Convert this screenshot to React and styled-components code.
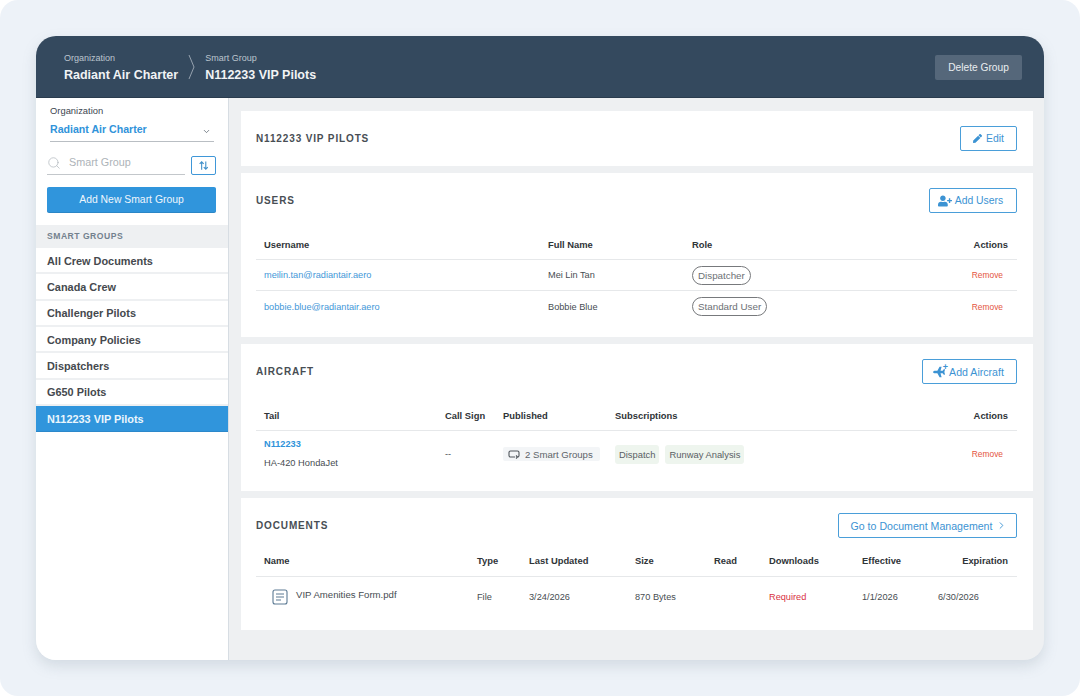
import styled, { createGlobalStyle } from "styled-components"
import { FaPen, FaUserPlus, FaPlane } from "react-icons/fa"
import { Search, ChevronDown, ChevronRight } from "lucide-react"

const GlobalStyle = createGlobalStyle`
    html, body {
        margin: 0;
        padding: 0;
        background: #ffffff;
        font-family: "Liberation Sans", Arial, sans-serif;
    }
    * { box-sizing: border-box; }
`
const Frame = styled.div`
    width: 1080px;
    height: 696px;
    padding: 36px;
    background: #edf2f8;
    border-radius: 18px;
    overflow: hidden;
`
const Card = styled.div`
    width: 1008px;
    height: 624px;
    border-radius: 20px;
    overflow: hidden;
    display: flex;
    flex-direction: column;
    background: #eef0f2;
    box-shadow: 0 6px 14px rgba(120, 135, 150, 0.22);
`
const Header = styled.header`
    height: 62px;
    flex: none;
    background: #34495e;
    border-bottom: 1px solid #2a3c4e;
    display: flex;
    align-items: center;
    padding: 2px 22px 0 28px;
    color: #fff;
`
const Crumb = styled.div`
    display: flex;
    flex-direction: column;
    gap: 4px;
`
const CrumbLabel = styled.span`
    font-size: 9px;
    line-height: 11px;
    color: #bcc5ce;
`
const CrumbValue = styled.span`
    font-size: 12.5px;
    line-height: 15px;
    font-weight: 700;
    color: #f1f3f5;
`
const CrumbArrow = styled.svg`
    width: 7px;
    height: 26px;
    margin: -2px 10px 0 10px;
    fill: none;
    stroke: #aeb9c4;
    stroke-width: 0.8;
`
const DeleteButton = styled.button`
    margin-left: auto;
    width: 87px;
    height: 25px;
    border: none;
    border-radius: 2px;
    background: #55677a;
    color: #e9edf0;
    font: 10.2px "Liberation Sans", Arial, sans-serif;
    padding: 0;
`
const Body = styled.div`
    flex: 1;
    min-height: 0;
    display: flex;
`
const Sidebar = styled.aside`
    width: 193px;
    flex: none;
    background: #fff;
    border-right: 1px solid #d7dde3;
    padding-top: 7px;
`
const Filters = styled.div`
    padding: 0 12px 0 11px;
`
const OrgLabel = styled.div`
    font-size: 9.4px;
    line-height: 11px;
    color: #3c4650;
    margin-left: 3px;
`
const OrgSelect = styled.div`
    margin: 7px 2px 0 3px;
    height: 19px;
    display: flex;
    justify-content: space-between;
    align-items: flex-start;
    border-bottom: 1.5px solid #b9bec3;
    color: #3093da;
    font-size: 10.6px;
    line-height: 13px;
    font-weight: 700;
    svg { margin: 4px 3px 0 0; color: #56616b; }
`
const SearchRow = styled.div`
    margin-top: 14px;
    display: flex;
    align-items: flex-end;
    gap: 6px;
`
const SearchField = styled.div`
    flex: 1;
    height: 19px;
    border-bottom: 1.5px solid #c3c7cb;
    display: flex;
    align-items: flex-start;
    gap: 8px;
    padding-left: 0;
    color: #adb3b8;
    font-size: 10.8px;
    line-height: 13px;
    svg { color: #b4bac0; margin-top: 0; }
`
const SortButton = styled.div`
    width: 25px;
    height: 19px;
    border: 1px solid #3f97d8;
    border-radius: 2px;
    display: flex;
    align-items: center;
    justify-content: center;
    svg { width: 11px; height: 11px; fill: none; stroke: #3f8fc9; stroke-width: 1.2; }
`
const AddGroupButton = styled.button`
    margin-top: 12px;
    width: 100%;
    height: 25px;
    border: none;
    border-radius: 2px;
    background: #3095dc;
    box-shadow: 0 1px 0 #2a86c6;
    color: #eef6fc;
    font: 10.4px "Liberation Sans", Arial, sans-serif;
    padding: 0;
`
const GroupsHeading = styled.div`
    margin-top: 13px;
    height: 23px;
    background: #eef0f2;
    padding-left: 11px;
    font-size: 8.6px;
    line-height: 23px;
    font-weight: 700;
    letter-spacing: 0.5px;
    color: #73818e;
`
const GroupItem = styled.div`
    height: 26.33px;
    padding: 1px 0 0 11px;
    display: flex;
    align-items: center;
    font-size: 10.9px;
    font-weight: 700;
    color: ${props => props.$active ? "#eaf5fc" : "#45494e"};
    background: ${props => props.$active ? "#3095dc" : "#fff"};
    border-bottom: ${props => props.$active ? "1px solid #2c88ca" : "2px solid #eef0f2"};
`
const Main = styled.main`
    flex: 1;
    min-width: 0;
    padding: 13px 11px 0 12px;
    display: flex;
    flex-direction: column;
    gap: 7px;
`
const Panel = styled.section`
    height: ${props => props.$h}px;
    flex: none;
    background: #fff;
    padding: 15px 16px 0 15px;
`
const PanelTop = styled.div`
    display: flex;
    justify-content: space-between;
    align-items: center;
`
const PanelTitle = styled.h2`
    margin: 0;
    font-size: 10px;
    line-height: 25px;
    font-weight: 700;
    letter-spacing: 0.86px;
    color: #484e54;
`
const OutlineButton = styled.button`
    height: 25px;
    width: ${props => props.$w}px;
    border: 1px solid #4a9ed9;
    border-radius: 2px;
    background: #fff;
    color: #3c93d3;
    font: ${props => props.$fs || 10.4}px "Liberation Sans", Arial, sans-serif;
    display: flex;
    align-items: center;
    justify-content: center;
    gap: ${props => props.$gap || 4}px;
    padding: 0 ${props => props.$pr || 0}px 0 ${props => props.$pl || 0}px;
`
const Row = styled.div`
    display: grid;
    grid-template-columns: ${props => props.$cols};
    align-items: center;
    height: ${props => props.$h}px;
    padding: ${props => props.$pt || 0}px 9px 0 8px;
    border-bottom: ${props => props.$plain ? "none" : "1px solid #e6e8ea"};
    margin-top: ${props => props.$mt || 0}px;
`
const HeadCell = styled.div`
    font-size: 9.4px;
    font-weight: 700;
    color: #2f3438;
    text-align: ${props => props.$right ? "right" : "left"};
    white-space: nowrap;
`
const Cell = styled.div`
    font-size: 9.2px;
    color: #474d52;
    white-space: nowrap;
    display: flex;
    align-items: center;
`
const LinkCell = styled(Cell)`
    color: #3f97d8;
`
const RemoveCell = styled(Cell)`
    font-size: 8.4px;
    color: #e4553f;
    justify-content: flex-end;
    padding-right: 5px;
`
const RolePill = styled.span`
    height: 19px;
    padding: 0 5px;
    border: 1px solid #77797c;
    border-radius: 10px;
    font-size: 9.8px;
    line-height: 17px;
    color: #6c7075;
`
const TailCell = styled.div`
    display: flex;
    flex-direction: column;
    gap: 8px;
`
const TailLink = styled.span`
    font-size: 9.2px;
    line-height: 11px;
    font-weight: 700;
    color: #3093da;
`
const TailModel = styled.span`
    font-size: 9.3px;
    line-height: 11px;
    color: #474d52;
`
const PublishedTag = styled.span`
    display: flex;
    align-items: center;
    gap: 5px;
    width: 97px;
    height: 14px;
    padding-left: 5px;
    border-radius: 2px;
    background: #f3f5f7;
    font-size: 9.6px;
    color: #5e6469;
    svg { width: 12px; height: 9px; fill: none; stroke: #50565c; stroke-width: 1.1; }
`
const TagList = styled.div`
    display: flex;
    gap: 6px;
`
const SubscriptionTag = styled.span`
    height: 19px;
    padding: 0 4px;
    border-radius: 3px;
    background: #eef5ee;
    font-size: 9.4px;
    line-height: 19px;
    color: #5a6064;
`
const FileCell = styled(Cell)`
    gap: 8px;
    padding-left: 8px;
    align-items: flex-start;
    svg { width: 16px; height: 16px; fill: none; stroke: #5c7a94; stroke-width: 1.1; }
    span { font-size: 9.6px; }
`
const RequiredCell = styled(Cell)`
    color: #d8323f;
`
const IconBox = styled.span`
    position: relative;
    display: flex;
    width: 14px;
    height: 12px;
    svg { transform: scaleX(-1); }
`
const PlusMark = styled.b`
    position: absolute;
    top: -3px;
    right: -1px;
    font-size: 9px;
    line-height: 9px;
`

const groups = ["All Crew Documents", "Canada Crew", "Challenger Pilots", "Company Policies", "Dispatchers", "G650 Pilots", "N112233 VIP Pilots"]
const users = [
    { email: "meilin.tan@radiantair.aero", name: "Mei Lin Tan", role: "Dispatcher" },
    { email: "bobbie.blue@radiantair.aero", name: "Bobbie Blue", role: "Standard User" },
]
const usersCols = "284px 144px 1fr 60px"
const aircraftCols = "181px 58px 112px 1fr 60px"
const docsCols = "213px 52px 106px 79px 55px 93px 76px 1fr"

const AddAircraftIcon = () => (
    <IconBox>
        <FaPlane size={12} />
        <PlusMark>+</PlusMark>
    </IconBox>
)

const SidebarContent = () => (
    <Sidebar>
        <Filters>
            <OrgLabel>Organization</OrgLabel>
            <OrgSelect>Radiant Air Charter<ChevronDown size={9} strokeWidth={2} /></OrgSelect>
            <SearchRow>
                <SearchField><Search size={14} strokeWidth={1.3} />Smart Group</SearchField>
                <SortButton>
                    <svg viewBox="0 0 12 12"><path d="M4 10.5V2M1.8 4.2 4 2l2.2 2.2M8.5 1.5V10M6.3 7.8 8.5 10l2.2-2.2" /></svg>
                </SortButton>
            </SearchRow>
            <AddGroupButton>Add New Smart Group</AddGroupButton>
        </Filters>
        <GroupsHeading>SMART GROUPS</GroupsHeading>
        {groups.map(g => <GroupItem key={g} $active={g === "N112233 VIP Pilots"}>{g}</GroupItem>)}
    </Sidebar>
)

export default function App() {
    return (
        <>
            <GlobalStyle />
            <Frame>
                <Card>
                    <Header>
                        <Crumb>
                            <CrumbLabel>Organization</CrumbLabel>
                            <CrumbValue>Radiant Air Charter</CrumbValue>
                        </Crumb>
                        <CrumbArrow viewBox="0 0 7 26"><path d="M1 1 6 13 1 25" /></CrumbArrow>
                        <Crumb>
                            <CrumbLabel>Smart Group</CrumbLabel>
                            <CrumbValue>N112233 VIP Pilots</CrumbValue>
                        </Crumb>
                        <DeleteButton>Delete Group</DeleteButton>
                    </Header>
                    <Body>
                        <SidebarContent />
                        <Main>
                            <Panel $h={55}>
                                <PanelTop>
                                    <PanelTitle>N112233 VIP PILOTS</PanelTitle>
                                    <OutlineButton $w={57}><FaPen size={9} />Edit</OutlineButton>
                                </PanelTop>
                            </Panel>
                            <Panel $h={164}>
                                <PanelTop>
                                    <PanelTitle>USERS</PanelTitle>
                                    <OutlineButton $w={88} $pr={5} $gap={3}><FaUserPlus size={14} />Add Users</OutlineButton>
                                </PanelTop>
                                <Row $cols={usersCols} $h={31} $mt={16}>
                                    <HeadCell>Username</HeadCell>
                                    <HeadCell>Full Name</HeadCell>
                                    <HeadCell>Role</HeadCell>
                                    <HeadCell $right>Actions</HeadCell>
                                </Row>
                                {users.map((u, i) => (
                                    <Row key={u.email} $cols={usersCols} $h={31} $plain={i === 1}>
                                        <LinkCell>{u.email}</LinkCell>
                                        <Cell>{u.name}</Cell>
                                        <Cell><RolePill>{u.role}</RolePill></Cell>
                                        <RemoveCell>Remove</RemoveCell>
                                    </Row>
                                ))}
                            </Panel>
                            <Panel $h={147}>
                                <PanelTop>
                                    <PanelTitle>AIRCRAFT</PanelTitle>
                                    <OutlineButton $w={95} $gap={2} $pr={2} $fs={10.6}><AddAircraftIcon />Add Aircraft</OutlineButton>
                                </PanelTop>
                                <Row $cols={aircraftCols} $h={31} $mt={16}>
                                    <HeadCell>Tail</HeadCell>
                                    <HeadCell>Call Sign</HeadCell>
                                    <HeadCell>Published</HeadCell>
                                    <HeadCell>Subscriptions</HeadCell>
                                    <HeadCell $right>Actions</HeadCell>
                                </Row>
                                <Row $cols={aircraftCols} $h={46} $plain>
                                    <TailCell>
                                        <TailLink>N112233</TailLink>
                                        <TailModel>HA-420 HondaJet</TailModel>
                                    </TailCell>
                                    <Cell>--</Cell>
                                    <Cell>
                                        <PublishedTag>
                                            <svg viewBox="0 0 12 9"><path d="M7 7H2.5A1.5 1.5 0 0 1 1 5.5v-3A1.5 1.5 0 0 1 2.5 1h7A1.5 1.5 0 0 1 11 2.5v3A1.5 1.5 0 0 1 9.5 7M9.5 7 8 5.5M9.5 7 8 8.5" /></svg>
                                            2 Smart Groups
                                        </PublishedTag>
                                    </Cell>
                                    <TagList>
                                        <SubscriptionTag>Dispatch</SubscriptionTag>
                                        <SubscriptionTag>Runway Analysis</SubscriptionTag>
                                    </TagList>
                                    <RemoveCell>Remove</RemoveCell>
                                </Row>
                            </Panel>
                            <Panel $h={132}>
                                <PanelTop>
                                    <PanelTitle>DOCUMENTS</PanelTitle>
                                    <OutlineButton $w={179} $gap={4} $pl={3} $fs={10.6}>Go to Document Management<ChevronRight size={11} /></OutlineButton>
                                </PanelTop>
                                <Row $cols={docsCols} $h={39} $pt={7}>
                                    <HeadCell>Name</HeadCell>
                                    <HeadCell>Type</HeadCell>
                                    <HeadCell>Last Updated</HeadCell>
                                    <HeadCell>Size</HeadCell>
                                    <HeadCell>Read</HeadCell>
                                    <HeadCell>Downloads</HeadCell>
                                    <HeadCell>Effective</HeadCell>
                                    <HeadCell $right>Expiration</HeadCell>
                                </Row>
                                <Row $cols={docsCols} $h={39} $plain>
                                    <FileCell>
                                        <svg viewBox="0 0 16 16"><rect x="1" y="1" width="14" height="14" rx="2" /><path d="M4 5h8M4 8h8M4 11h5" /></svg>
                                        <span>VIP Amenities Form.pdf</span>
                                    </FileCell>
                                    <Cell>File</Cell>
                                    <Cell>3/24/2026</Cell>
                                    <Cell>870 Bytes</Cell>
                                    <Cell />
                                    <RequiredCell>Required</RequiredCell>
                                    <Cell>1/1/2026</Cell>
                                    <Cell>6/30/2026</Cell>
                                </Row>
                            </Panel>
                        </Main>
                    </Body>
                </Card>
            </Frame>
        </>
    )
}
